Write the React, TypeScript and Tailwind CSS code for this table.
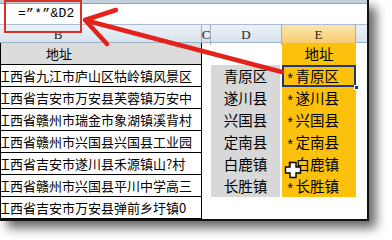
import React from 'react';

const addresses = [
  '江西省九江市庐山区牯岭镇风景区',
  '江西省吉安市万安县芙蓉镇万安中',
  '江西省赣州市瑞金市象湖镇溪背村',
  '江西省赣州市兴国县兴国县工业园',
  '江西省吉安市遂川县禾源镇山?村',
  '江西省赣州市兴国县平川中学高三',
  '江西省吉安市万安县弹前乡圩镇0',
];

const towns = ['青原区', '遂川县', '兴国县', '定南县', '白鹿镇', '长胜镇'];

const cjk = "font-['Noto_Sans_CJK_SC',sans-serif]";

export default function App() {
  return (
    <div className="relative w-[392px] h-[240px] overflow-hidden bg-white">
      <div className="w-[369px] h-[221px] border-r-2 border-b-2 border-[#111] shadow-[7px_7px_10px_rgba(0,0,0,0.6)] bg-white flex flex-col overflow-hidden">
        {/* ribbon edge */}
        <div className="h-[4px] bg-[#c4cfdc] border-b border-[#8fa3bb]" />
        {/* formula bar */}
        <div className="h-[24px] flex items-center pl-[18px] border-b border-[#a9bdd3]">
          <span className="font-['Liberation_Mono',monospace] text-[13px] text-black tracking-[0.3px]">=”*”&amp;D2</span>
        </div>
        {/* column headers */}
        <div className="h-[18px] grid grid-cols-[202px_9px_71px_74px_1fr] font-['Liberation_Serif',serif] text-[13px] text-[#222] border-b border-[#9db1c8] bg-gradient-to-b from-[#eef2f8] to-[#d8e2ee]">
          <div className="border-r border-[#9db1c8] flex items-center">
            <span className="w-[116px] text-center">B</span>
          </div>
          <div className="border-r border-[#9db1c8] flex items-center justify-center leading-none">C</div>
          <div className="border-r border-[#9db1c8] flex items-center justify-center">D</div>
          <div className="border-r border-[#9db1c8] flex items-center justify-center bg-gradient-to-b from-[#fce6ae] to-[#f7c965]">E</div>
          <div />
        </div>
        {/* body */}
        <div className={`flex ${cjk} text-black`}>
          <div className="w-[202px] border-l border-r border-black flex flex-col">
            <div className="h-[22px] bg-[#dcdcdc] border-b border-black flex items-center text-[13px]">
              <span className="w-[116px] text-center">地址</span>
            </div>
            {addresses.map((a) => (
              <div key={a} className="h-[22px] border-b border-black flex items-center text-[13px] whitespace-nowrap overflow-hidden">
                <span className="ml-[-4px]">{a}</span>
              </div>
            ))}
          </div>
          <div className="w-[9px]" />
          <div className="w-[69px] flex flex-col">
            <div className="h-[22px]" />
            {towns.map((t) => (
              <div key={t} className="h-[22px] bg-[#d8d8d8] flex items-center justify-center text-[14.5px]">
                {t}
              </div>
            ))}
          </div>
          <div className="w-[2px]" />
          <div className="w-[74px] flex flex-col bg-[#fcc10c] h-fit">
            <div className="h-[22px] flex items-center justify-center text-[14.5px]">地址</div>
            {towns.map((t, i) => (
              <div
                key={t}
                className={`relative h-[22px] flex items-center pl-[4px] text-[14.5px] ${i === 0 ? 'outline-2 outline-[#1e3775] -outline-offset-2' : ''}`}
              >
                <span className="relative top-[4px] font-['Liberation_Mono',monospace] text-[14px] mr-[1px]">*</span>
                {t}
                {i === 0 && (
                  <span className="absolute right-[-3px] bottom-[-3px] w-[5px] h-[5px] bg-[#1e3775] border border-white" />
                )}
              </div>
            ))}
          </div>
        </div>
      </div>

      {/* red highlight box */}
      <div className="absolute left-[4px] top-0 w-[78px] h-[33px] border-2 border-[#d8302b]" />

      {/* red arrow */}
      <svg className="absolute left-0 top-0" width="392" height="240" viewBox="0 0 392 240">
        <g stroke="#e2221b" strokeWidth="4.5" strokeLinecap="round" fill="none">
          <line x1="88" y1="21" x2="282" y2="72" />
          <polyline points="116,10 85,20 107,44" strokeLinejoin="round" />
        </g>
      </svg>

      {/* excel fat cross cursor */}
      <svg className="absolute left-[284px] top-[161px]" width="18" height="18" viewBox="0 0 18 18">
        <path
          d="M6 1.5h6v4.5h4.5v6h-4.5v4.5h-6v-4.5h-4.5v-6h4.5z"
          fill="#fff"
          stroke="#000"
          strokeWidth="1.4"
        />
      </svg>
    </div>
  );
}
